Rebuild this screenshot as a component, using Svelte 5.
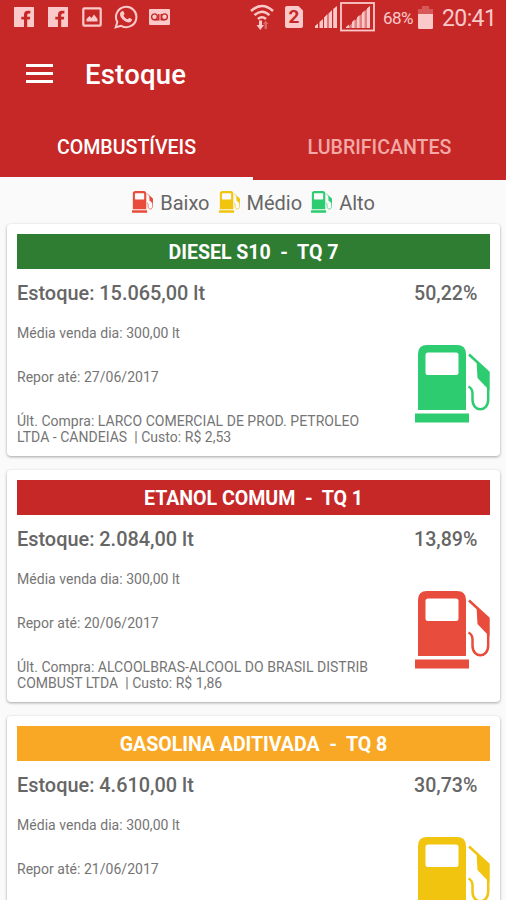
<script lang="ts">
  type Level = 'low' | 'mid' | 'high';

  interface Tank {
    name: string;
    tank: string;
    level: Level;
    stock: string;
    percent: string;
    average: string;
    refill: string;
    purchase: string[];
  }

  const tabs = ['COMBUSTÍVEIS', 'LUBRIFICANTES'];
  let activeTab = $state(0);

  const legend: { level: Level; label: string }[] = [
    { level: 'low', label: 'Baixo' },
    { level: 'mid', label: 'Médio' },
    { level: 'high', label: 'Alto' },
  ];

  const tanks: Tank[] = [
    {
      name: 'DIESEL S10',
      tank: 'TQ 7',
      level: 'high',
      stock: '15.065,00',
      percent: '50,22%',
      average: '300,00',
      refill: '27/06/2017',
      purchase: ['LARCO COMERCIAL DE PROD. PETROLEO', 'LTDA - CANDEIAS  | Custo: R$ 2,53'],
    },
    {
      name: 'ETANOL COMUM',
      tank: 'TQ 1',
      level: 'low',
      stock: '2.084,00',
      percent: '13,89%',
      average: '300,00',
      refill: '20/06/2017',
      purchase: ['ALCOOLBRAS-ALCOOL DO BRASIL DISTRIB', 'COMBUST LTDA  | Custo: R$ 1,86'],
    },
    {
      name: 'GASOLINA ADITIVADA',
      tank: 'TQ 8',
      level: 'mid',
      stock: '4.610,00',
      percent: '30,73%',
      average: '300,00',
      refill: '21/06/2017',
      purchase: [],
    },
  ];
</script>

{#snippet pump(level: Level)}
  <svg class="pump pump--{level}" viewBox="0 0 75 78" aria-hidden="true">
    <path
      fill="currentColor"
      fill-rule="evenodd"
      d="M3 65V9q0-9 9-9h30q9 0 9 9v56zM13 7.500q-2.500 0-2.500 2.500v17.500q0 2.500 2.500 2.500h28q2.500 0 2.500-2.500V10q0-2.500-2.500-2.500z"
    />
    <path fill="currentColor" d="M0 68.500h54V77.500H0z" />
    <path fill="currentColor" d="M61.500 16 74.500 27V45.500l-2.500-2.500-9.500-10z" />
    <path
      fill="none"
      stroke="currentColor"
      stroke-width="2.500"
      d="M54 9.500 73.200 27V54.500c0 13-15.700 13-15.700 0v-6q0-5-4-7"
    />
  </svg>
{/snippet}

{#snippet facebook()}
  <svg class="icon-fb" viewBox="0 0 20 20" aria-hidden="true">
    <path
      fill="currentColor"
      fill-rule="evenodd"
      d="M0 0h20v20H0zM10 20h3.200v-7.500h2.600l.4-2.800h-3V8q0-1.500 1.500-1.500h1.700V3.700h-2.600Q10 3.700 10 7.500v2.200H7.300v2.800H10z"
    />
  </svg>
{/snippet}

<div class="screen">
  <header class="app-header">
    <div class="status-bar">
      <div class="status-left">
        {@render facebook()}
        {@render facebook()}
        <svg class="icon-image" viewBox="0 0 20 20" aria-hidden="true">
          <rect x="1.300" y="1.300" width="17.400" height="17.400" rx="1" fill="none" stroke="currentColor" stroke-width="2.200" />
          <path fill="currentColor" d="M4.500 14.500V12l3-3 2 2L12 7.500l3.500 4.500v2.500z" />
        </svg>
        <svg class="icon-whatsapp" viewBox="0 0 24 24" aria-hidden="true">
          <path fill="none" stroke="currentColor" stroke-width="2" d="M1.700 22.300 3.300 17A10.200 10.200 0 1 1 7.200 20.900z" />
          <path fill="currentColor" d="M8 6.200c1-.5 1.400-.2 1.700.6l.8 1.900c.2.700-.9 1.500-.9 2 .9 1.700 2.200 2.800 3.900 3.500.6 0 1.200-1.500 1.800-1.300l2.400 1.200c.6.500-.1 2.300-1.100 2.900-1.800 1-4.200.2-6.300-1.200C7.600 13.900 5.800 11 6 9c.1-1.300.9-2.300 2-2.800z" />
        </svg>
        <svg class="icon-voicemail" viewBox="0 0 21 16" aria-hidden="true">
          <rect width="21" height="16" rx="1" fill="currentColor" />
          <g class="cutout">
            <circle cx="5.500" cy="7.800" r="2.900" />
            <circle cx="15.500" cy="7.800" r="2.900" />
            <path d="M5.500 10.800h4.300V5M15.500 10.800h-3.300V5" />
          </g>
        </svg>
      </div>
      <div class="status-right">
        <svg class="icon-wifi" viewBox="0 0 24 26" aria-hidden="true">
          <g fill="none" stroke="currentColor" stroke-width="2.500">
            <path d="M1 7q11-10 22 0M4.500 11.200q7.500-7 15 0M8 15q4-3.500 8 0" />
          </g>
          <path fill="currentColor" d="M9 16.500h3v4.500h2L10.300 26 6.500 21H9z" />
          <path fill="currentColor" opacity=".4" d="M14.500 25v-5H13l2.700-3.500 2.800 3.500h-1.500v5z" />
        </svg>
        <span class="sim">2</span>
        <svg class="icon-signal" viewBox="0 0 22 22" aria-hidden="true">
          <path fill="currentColor" d="M0 22v-2l3-2.500V22zM4.500 22v-6l3.500-3v9zM9 22V11.500L12.500 8v14zM13.500 22V7.500L17 4v18zM18.200 22V3L22 0v22z" />
        </svg>
        <svg class="icon-signal-box" viewBox="0 0 35 30" aria-hidden="true">
          <rect x="1" y="1" width="33" height="27.500" fill="none" stroke="currentColor" stroke-width="1.800" />
          <path fill="currentColor" opacity=".55" d="M7 26 30 4v22z" />
          <path fill="currentColor" d="M6 26v-1l3-2.500V26zM12 26v-6l2.500-2.500V26zM17 26V15.500l2.500-2.500v13zM22 26V11l2.500-2.500V26zM27 26V6.500L30 4v22z" />
        </svg>
        <span class="battery-text">68%</span>
        <svg class="icon-battery" viewBox="0 0 15 23" aria-hidden="true">
          <path fill="currentColor" opacity=".3" d="M4 0h7v3h4v6H0V3h4z" />
          <path fill="currentColor" d="M0 8h15v13.500q0 1.500-1.500 1.500h-12Q0 23 0 21.500z" />
        </svg>
        <span class="clock">20:41</span>
      </div>
    </div>

    <div class="toolbar">
      <button class="menu" aria-label="Menu">
        <span></span>
        <span></span>
        <span></span>
      </button>
      <h1 class="title">Estoque</h1>
    </div>

    <nav class="tabs">
      {#each tabs as tab, i}
        <button class="tab" class:tab--active={activeTab === i} onclick={() => (activeTab = i)}>
          <span>{tab}</span>
        </button>
      {/each}
    </nav>
  </header>

  <div class="legend">
    {#each legend as item}
      <div class="legend-item">
        {@render pump(item.level)}
        <span>{item.label}</span>
      </div>
    {/each}
  </div>

  <main class="cards">
    {#each tanks as t}
      <article class="card">
        <h2 class="card-title card-title--{t.level}">{t.name}  -  {t.tank}</h2>
        <div class="card-body">
          <div class="card-info">
            <strong class="stock">Estoque: {t.stock} lt</strong>
            <p>Média venda dia: {t.average} lt</p>
            <p>Repor até: {t.refill}</p>
            {#if t.purchase.length > 0}
              <p>Últ. Compra: {t.purchase.join('\n')}</p>
            {/if}
          </div>
          <div class="card-level">
            <strong class="percent">{t.percent}</strong>
            {@render pump(t.level)}
          </div>
        </div>
      </article>
    {/each}
  </main>
</div>

<style>
  :global(body) {
    margin: 0;
  }

  .screen {
    display: flex;
    flex-direction: column;
    height: 900px;
    overflow: hidden;
    background: #fafafa;
    color: #666;
    font-family: Roboto, 'Liberation Sans', sans-serif;
  }

  .app-header {
    flex-shrink: 0;
    height: 180px;
    background: #c62828;
    color: #fff;
  }

  .status-bar {
    display: flex;
    justify-content: space-between;
    height: 34px;
    padding: 0 10px 0 14px;
    color: #fbc9c9;
  }

  .status-left,
  .status-right {
    display: flex;
    align-items: center;
  }

  .status-left {
    gap: 14px;
  }

  .icon-fb {
    width: 20px;
    height: 20px;
  }

  .icon-image {
    width: 20px;
    height: 20px;
  }

  .icon-whatsapp {
    width: 24px;
    height: 24px;
    margin-left: -2px;
  }

  .icon-voicemail {
    width: 21px;
    height: 16px;
    margin-left: -3px;
  }

  .cutout {
    fill: none;
    stroke: #c62828;
    stroke-width: 1.4;
  }

  .icon-wifi {
    width: 24px;
    height: 26px;
    margin-right: 11px;
  }

  .sim {
    width: 18px;
    height: 22px;
    margin-right: 12px;
    border-radius: 2px;
    background: #fbc9c9;
    color: #c62828;
    clip-path: polygon(0 0, 75% 0, 100% 20%, 100% 100%, 0 100%);
    font-size: 19px;
    font-weight: 700;
    line-height: 22px;
    text-align: center;
  }

  .icon-signal {
    width: 22px;
    height: 22px;
    margin-right: 3px;
  }

  .icon-signal-box {
    width: 35px;
    height: 30px;
    margin-right: 8px;
  }

  .battery-text {
    width: 35px;
    padding-top: 1px;
    font-size: 17px;
    letter-spacing: -0.5px;
  }

  .icon-battery {
    width: 15px;
    height: 23px;
    margin-right: 9px;
  }

  .clock {
    width: 54px;
    padding-top: 2px;
    font-size: 23px;
    letter-spacing: -0.6px;
  }

  .toolbar {
    display: flex;
    align-items: center;
    height: 82px;
    padding-left: 26px;
  }

  .menu {
    display: flex;
    flex-direction: column;
    gap: 5px;
    width: 27px;
    margin: 0 32px 3px 0;
    padding: 0;
    border: 0;
    background: none;
  }

  .menu span {
    height: 3px;
    background: #fff;
  }

  .title {
    margin: 0;
    font-size: 27.500px;
    font-weight: 500;
    letter-spacing: 0.2px;
    line-height: 32px;
  }

  .tabs {
    display: grid;
    grid-template-columns: 1fr 1fr;
    height: 64px;
  }

  .tab {
    padding: 2px 0 0;
    border: 0;
    border-bottom: 3px solid transparent;
    background: none;
    color: #f3a9a5;
    font-family: inherit;
    font-size: 19.600px;
    font-weight: 500;
  }

  .tab--active {
    border-bottom-color: #fafafa;
    color: #fff;
  }

  .legend {
    display: flex;
    box-sizing: border-box;
    flex-shrink: 0;
    align-items: center;
    justify-content: center;
    gap: 9px;
    height: 44px;
    padding: 2px 0 0 1px;
    font-size: 20px;
  }

  .legend-item {
    display: flex;
    align-items: center;
    gap: 7px;
  }

  .legend-item .pump {
    width: 21px;
    height: 22px;
    margin-bottom: 2px;
  }

  .pump {
    display: block;
  }

  .pump--low {
    color: #e74c3c;
  }

  .pump--mid {
    color: #f1c40f;
  }

  .pump--high {
    color: #2ecc71;
  }

  .cards {
    display: flex;
    flex-direction: column;
    gap: 14px;
    padding: 0 6px 0 7px;
  }

  .card {
    box-sizing: border-box;
    flex-shrink: 0;
    height: 232px;
    padding: 10px;
    border-radius: 4px;
    background: #fff;
    box-shadow: 0 1px 3px rgba(0, 0, 0, 0.35);
  }

  .card-title {
    height: 35px;
    margin: 0;
    color: #fff;
    font-size: 19.600px;
    font-weight: 700;
    letter-spacing: -0.05px;
    line-height: 37px;
    text-align: center;
    white-space: pre;
  }

  .card-title--high {
    background: #2e7d32;
  }

  .card-title--low {
    background: #c62828;
  }

  .card-title--mid {
    background: #f9a825;
  }

  .card-body {
    display: flex;
    justify-content: space-between;
  }

  .card-info p {
    margin: 0 0 28px;
    color: #757575;
    font-size: 14px;
    letter-spacing: 0.03px;
    line-height: 16px;
    white-space: pre;
  }

  .stock,
  .percent {
    display: block;
    font-size: 19.900px;
    font-weight: 500;
    line-height: 49px;
    white-space: nowrap;
  }

  .stock {
    margin-bottom: 7px;
  }

  .card-level {
    width: 75px;
  }

  .percent {
    margin-left: -1px;
    font-size: 19.600px;
  }

  .card-level .pump {
    width: 75px;
    height: 78px;
    margin-top: 27px;
  }
</style>
